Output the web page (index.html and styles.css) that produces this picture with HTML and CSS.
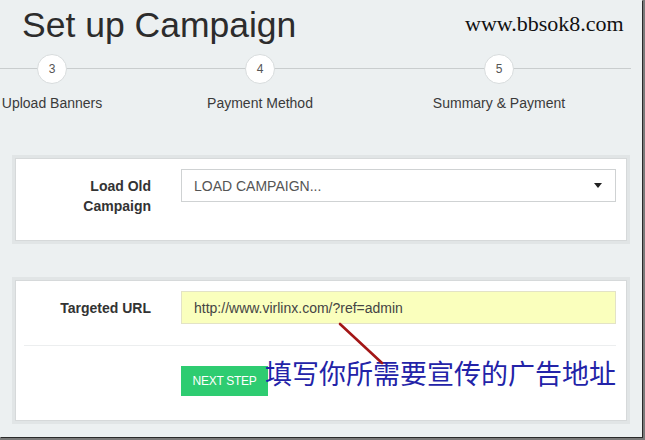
FILE: index.html
```html
<!DOCTYPE html>
<html>
<head>
<meta charset="utf-8">
<link rel="stylesheet" href="styles.css">
</head>
<body>
<div class="page">
  <h1 class="title">Set up Campaign</h1>
  <div class="steps">
    <div class="step">
      <div class="circle">3</div>
      <div class="step-label">Upload Banners</div>
    </div>
    <div class="step">
      <div class="circle">4</div>
      <div class="step-label">Payment Method</div>
    </div>
    <div class="step">
      <div class="circle">5</div>
      <div class="step-label">Summary &amp; Payment</div>
    </div>
  </div>

  <div class="card card-load">
    <div class="row">
      <div class="field-label">Load Old Campaign</div>
      <div class="select">
        <span>LOAD CAMPAIGN...</span>
        <span class="caret"></span>
      </div>
    </div>
  </div>

  <div class="card card-url">
    <div class="row">
      <div class="field-label">Targeted URL</div>
      <div class="input">http://www.virlinx.com/?ref=admin</div>
    </div>
    <div class="divider"></div>
    <div class="btn">NEXT STEP</div>
  </div>

  <div class="watermark">www.bbsok8.com</div>
  <div class="note">填写你所需要宣传的广告地址</div>
  <svg class="arrow" width="645" height="440" viewBox="0 0 645 440">
    <line x1="340" y1="324" x2="382" y2="363" stroke="#a31616" stroke-width="2.6" stroke-linecap="round"/>
  </svg>
</div>
</body>
</html>
```

FILE: styles.css
```css
html, body {
  margin: 0;
  padding: 0;
}
body {
  background: #7a7a7a;
  width: 645px;
  height: 440px;
  overflow: hidden;
  font-family: "Liberation Sans", Arial, sans-serif;
}
.page {
  position: relative;
  width: 642px;
  height: 437px;
  background: #ecf0f1;
  box-shadow: 1px 1px 0 #2a2a2a;
  overflow: hidden;
}
.title {
  margin: 0;
  padding: 5px 0 0 22px;
  font-size: 35.5px;
  line-height: 40px;
  font-weight: normal;
  color: #2c2c2c;
}
.steps {
  margin-top: 9px;
  display: grid;
  grid-template-columns: 104px 312px 166px;
  background: linear-gradient(#c9cdce, #c9cdce) no-repeat 0 14px / 631px 1px;
}
.step {
  display: flex;
  flex-direction: column;
  align-items: center;
}
.circle {
  width: 30px;
  height: 30px;
  box-sizing: border-box;
  border: 1px solid #d8dcdd;
  border-radius: 50%;
  background: #fff;
  display: flex;
  align-items: center;
  justify-content: center;
  font-size: 12px;
  color: #555;
}
.step-label {
  margin-top: 9px;
  font-size: 14px;
  line-height: 20px;
  color: #3a3a3a;
  white-space: nowrap;
}
.card {
  margin-left: 15px;
  width: 612px;
  box-sizing: border-box;
  background: #fff;
  border: 1px solid #d6d9da;
  box-shadow: 0 0 0 3px #e1e5e6;
  padding: 10px 10px 24px 8px;
}
.card-load {
  margin-top: 45px;
}
.card-url {
  margin-top: 39px;
}
.row {
  display: flex;
  align-items: flex-start;
}
.field-label {
  width: 127px;
  flex: none;
  margin-right: 30px;
  padding-top: 7px;
  text-align: right;
  font-weight: bold;
  font-size: 14px;
  line-height: 20px;
  color: #333;
}
.select, .input {
  flex: 1;
  height: 33px;
  box-sizing: border-box;
  border: 1px solid #cfd2d3;
  padding: 0 13px 0 12px;
  display: flex;
  align-items: center;
  font-size: 14px;
  color: #555;
}
.select {
  justify-content: space-between;
  background: #fff;
}
.caret {
  width: 0;
  height: 0;
  border-left: 4px solid transparent;
  border-right: 4px solid transparent;
  border-top: 5px solid #222;
}
.input {
  background: #faffbd;
  border-color: #e3e3c6;
  color: #444;
}
.divider {
  margin-top: 21px;
  height: 1px;
  background: #eceeef;
}
.btn {
  margin: 20px 0 0 157px;
  width: 87px;
  height: 30px;
  background: #2ecc71;
  color: #fff;
  font-size: 12px;
  letter-spacing: -0.3px;
  display: flex;
  align-items: center;
  justify-content: center;
}
.watermark {
  position: absolute;
  left: 465px;
  top: 11px;
  font-family: "Liberation Serif", "Times New Roman", serif;
  font-size: 22px;
  line-height: 26px;
  color: #111;
}
.note {
  position: absolute;
  left: 265px;
  top: 357px;
  font-family: "Noto Sans CJK SC", sans-serif;
  font-size: 27px;
  line-height: 32px;
  color: #2323a8;
  white-space: nowrap;
}
.arrow {
  position: absolute;
  left: 0;
  top: 0;
  pointer-events: none;
}
```
